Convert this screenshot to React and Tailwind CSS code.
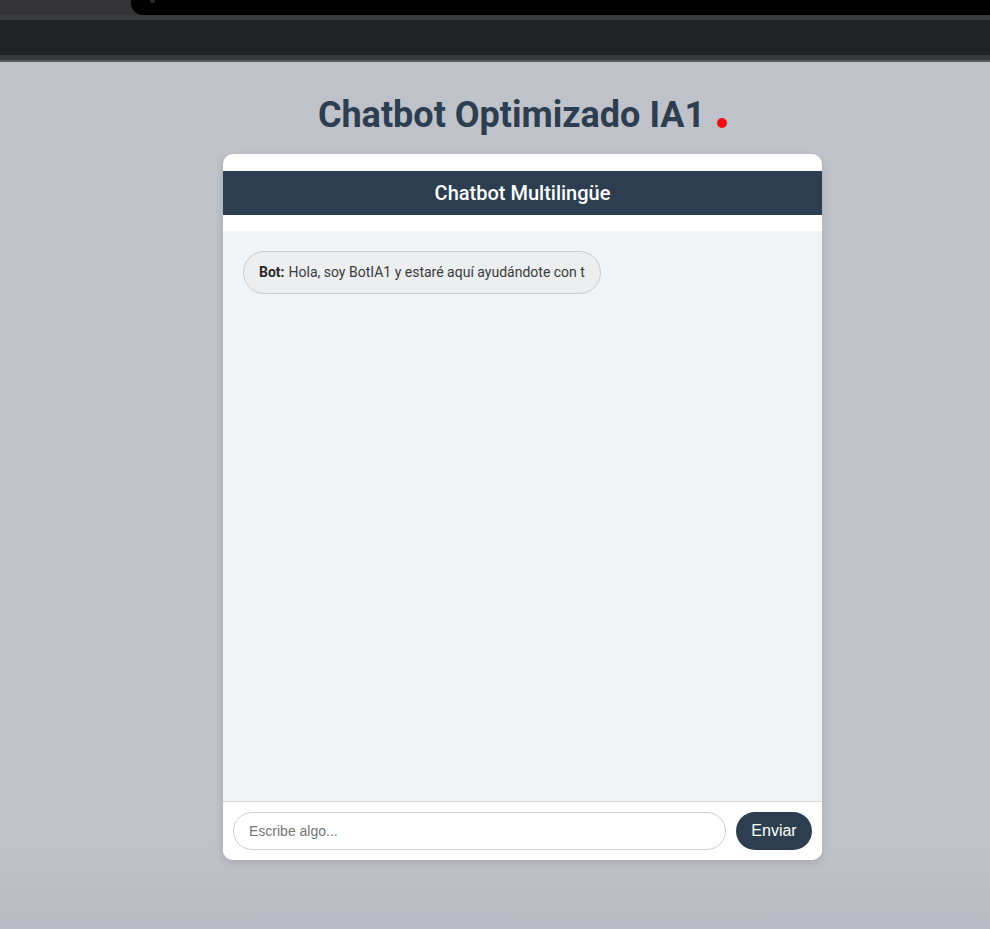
export default function App() {
  return (
    <div className="min-h-[929px] w-full flex flex-col bg-[#c0c2c9]" style={{ fontFamily: "Roboto, 'Liberation Sans', sans-serif" }}>
      {/* top chrome */}
      <div className="flex h-[15px] bg-[#343436]">
        <div className="w-[131px] shrink-0" />
        <div className="flex-1 bg-black rounded-bl-[12px] relative">
          <div className="absolute left-[19px] top-[-2px] w-[5px] h-[5px] rounded-full bg-[#2a2a2a]" />
        </div>
      </div>
      <div className="h-[5px] bg-[#3a3b3e]" />
      <div className="h-[35px] bg-[#222326]" />
      <div className="h-[5px] bg-[#38393c]" />
      <div className="h-[2px] bg-[#5a5b5e]" />

      <div className="flex flex-col items-center pt-[32px] pb-[69px] bg-gradient-to-b from-[#c0c2c9] from-90% to-[#b9bac3]">
        <div className="w-[599px] ml-[55px] flex flex-col">
          <h1 className="text-[36px] leading-[42px] font-bold text-[#2c3e50] text-center">
            Chatbot Optimizado IA1
            <span className="inline-block w-[10px] h-[10px] rounded-full bg-[#f20d15] ml-[12px] align-[-1px]" />
          </h1>

          <div className="mt-[18px] h-[706px] bg-white rounded-[10px] shadow-[0_3px_8px_rgba(0,0,0,0.12)] flex flex-col overflow-hidden">
            <div className="h-[17px]" />
            <div className="h-[44px] bg-[#2c3e50] flex items-center justify-center text-white text-[20px] font-medium">
              Chatbot Multilingüe
            </div>
            <div className="h-[16px]" />
            <div className="flex-1 bg-[#f0f4f7] p-[20px] flex flex-col items-start">
              <div className="h-[43px] rounded-full border border-[#c9cacc] bg-[#eceef0] flex items-center px-[15px] whitespace-nowrap text-[14px] text-[#3a3a3a]">
                <b className="font-bold mr-[4px] text-[#2a2a2a]">Bot:</b>
                Hola, soy BotIA1 y estaré aquí ayudándote con t
              </div>
            </div>
            <div className="border-t border-[#d5d7da] h-[59px] flex items-center px-[10px] gap-[10px] bg-white">
              <input
                className="flex-1 h-[38px] rounded-full border border-[#cfcfcf] px-[15px] text-[14px] outline-none placeholder:text-[#757575]"
                style={{ fontFamily: "'Liberation Sans', Arial, sans-serif" }}
                placeholder="Escribe algo..."
              />
              <button
                className="w-[76px] h-[38px] rounded-full bg-[#2c3e50] text-white text-[16px]"
                style={{ fontFamily: "'Liberation Sans', Arial, sans-serif" }}
              >
                Enviar
              </button>
            </div>
          </div>
        </div>
      </div>
    </div>
  );
}
